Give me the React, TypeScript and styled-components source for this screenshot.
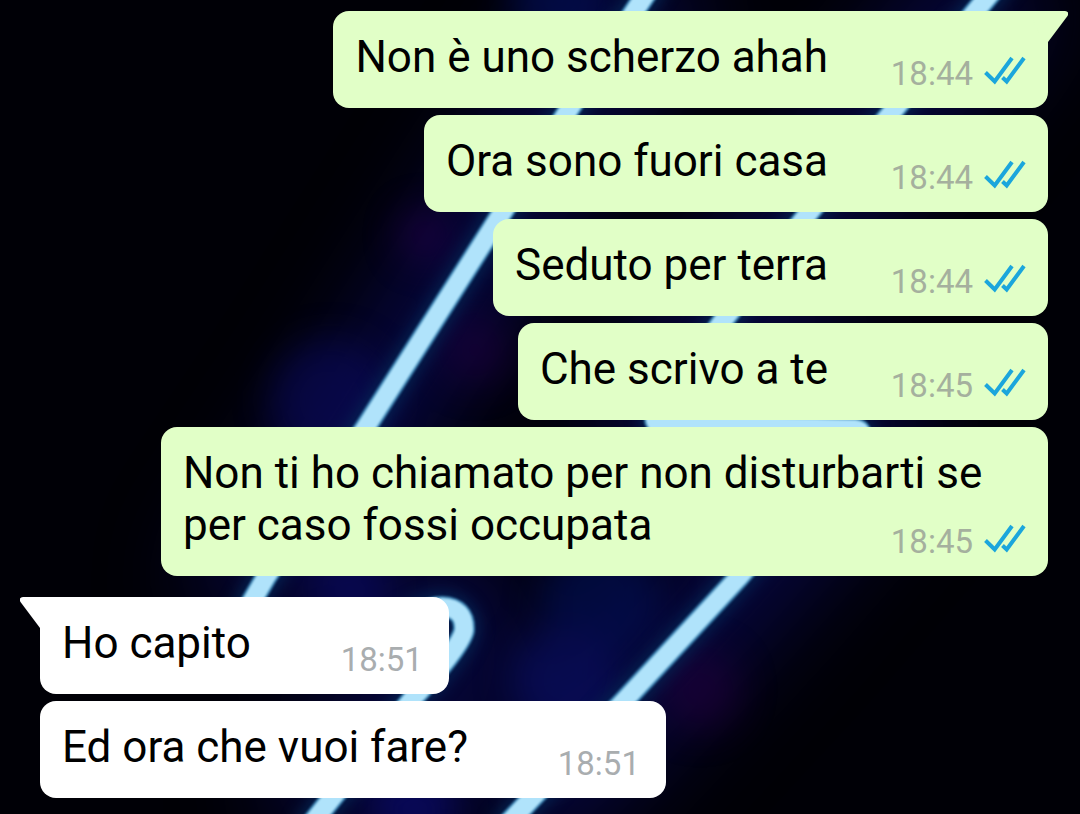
import React from "react";
import styled, { createGlobalStyle } from "styled-components";

const GlobalStyle = createGlobalStyle`
  * { box-sizing: border-box; }
  body {
    margin: 0;
    background: #00000a;
    font-family: Roboto, "Liberation Sans", sans-serif;
  }
`;

const Screen = styled.main`
  position: relative;
  isolation: isolate;
  min-height: 100vh;
  overflow: hidden;
  padding: 11px 32px 16px 40px;
`;

const Wallpaper = styled.svg`
  position: absolute;
  inset: 0;
  z-index: -1;
  width: 100%;
  height: 100%;
`;

const Conversation = styled.div`
  display: flex;
  flex-direction: column;
  gap: 21px;
`;

const MessageGroup = styled.ul<{ $sent: boolean }>`
  display: flex;
  flex-direction: column;
  align-items: ${(p) => (p.$sent ? "flex-end" : "flex-start")};
  gap: 7px;
  margin: 0;
  padding: 0;
  list-style: none;
`;

const Bubble = styled.li<{ $sent: boolean }>`
  position: relative;
  display: grid;
  max-width: 88%;
  padding: 20px 22px 15px;
  border-radius: 16px;
  background: ${(p) => (p.$sent ? "#e1ffc7" : "#ffffff")};
  color: #000000;
`;

const MessageText = styled.p`
  grid-area: 1 / 1;
  margin: 0;
  padding-bottom: 10px;
  font-size: 44px;
  line-height: 52px;
`;

/* Keeps the end of the last line clear of the time stamp. */
const StampRoom = styled.span<{ $sent: boolean }>`
  display: inline-block;
  width: ${(p) => (p.$sent ? 198 : 176)}px;
`;

const Stamp = styled.div<{ $sent: boolean }>`
  grid-area: 1 / 1;
  place-self: end;
  display: flex;
  align-items: center;
  gap: 11px;
  margin-right: ${(p) => (p.$sent ? 0 : 4)}px;
  color: ${(p) => (p.$sent ? "#a5b09e" : "#a9adaf")};
  font-size: 33px;
  line-height: 38px;
`;

const TickIcon = styled.svg`
  display: block;
  width: 42px;
  height: 30px;
  margin-bottom: 7px;
`;

const TailShape = styled.svg<{ $sent: boolean }>`
  position: absolute;
  top: 0;
  ${(p) => (p.$sent ? "right: -20px;" : "left: -20px; transform: scaleX(-1);")}
  width: 40px;
  height: 32px;
`;

function Ticks() {
  return (
    <TickIcon viewBox="0 0 42 30" role="img" aria-label="Letto" fill="none" stroke="#1ba6dc" strokeWidth="4">
      <path d="M1.5 16.5 L10.7 25.5 L28 2" />
      <path d="M18.5 21.5 L22.7 25.5 L40 2" />
    </TickIcon>
  );
}

function Tail({ sent }: { sent: boolean }) {
  return (
    <TailShape $sent={sent} viewBox="0 0 40 32" aria-hidden="true">
      <path d="M0 0 H37 Q42 1 39.5 5 L20 31 H16 Z" fill={sent ? "#e1ffc7" : "#ffffff"} />
    </TailShape>
  );
}

const neonStrokes = [
  "M662 -30 L642 0 L568 111 L502 213 L366 427 L266 577 L240 622",
  "M1010 -30 L985 0 L893 111 L807 215 L722 322 L656 414 Q652 425 663 424 L855 429 Q866 430 854 445 L738 578 L625 700 L532 798 L500 832",
  "M380 640 Q418 607 442 607 Q465 608 464 630 Q462 645 414 697 L332 798 L305 832",
];

const glows = [
  { cx: 425, cy: 235, r: 26, fill: "#22004a" },
  { cx: 330, cy: 400, r: 60, fill: "#0a0a58" },
  { cx: 475, cy: 350, r: 34, fill: "#1c003c" },
  { cx: 600, cy: 600, r: 60, fill: "#02105a" },
  { cx: 565, cy: 680, r: 55, fill: "#0a1068" },
  { cx: 700, cy: 690, r: 40, fill: "#20003a" },
  { cx: 350, cy: 590, r: 40, fill: "#0a0a64" },
  { cx: 415, cy: 810, r: 45, fill: "#0c0c78" },
  { cx: 560, cy: 0, r: 50, fill: "#02105a" },
];

function NeonBackground() {
  return (
    <Wallpaper viewBox="0 0 1080 814" preserveAspectRatio="xMidYMid slice" aria-hidden="true">
      <defs>
        <filter id="haze" filterUnits="userSpaceOnUse" x="-200" y="-200" width="1480" height="1214" colorInterpolationFilters="sRGB">
          <feGaussianBlur stdDeviation="45" />
        </filter>
        <filter id="spot" filterUnits="userSpaceOnUse" x="-200" y="-200" width="1480" height="1214" colorInterpolationFilters="sRGB">
          <feGaussianBlur stdDeviation="18" />
        </filter>
        <filter id="halo" filterUnits="userSpaceOnUse" x="-200" y="-200" width="1480" height="1214" colorInterpolationFilters="sRGB">
          <feGaussianBlur stdDeviation="8" />
        </filter>
        <filter id="edge" filterUnits="userSpaceOnUse" x="-200" y="-200" width="1480" height="1214" colorInterpolationFilters="sRGB">
          <feGaussianBlur stdDeviation="1.3" />
        </filter>
      </defs>
      <rect width="1080" height="814" fill="#000006" />
      <g fill="none" strokeLinejoin="round">
        <g stroke="#06063c" strokeWidth="130" filter="url(#haze)">
          {neonStrokes.map((d) => <path key={d} d={d} />)}
        </g>
        <g opacity="0.6" filter="url(#spot)">
          {glows.map((glow) => <circle key={`${glow.cx}-${glow.cy}`} {...glow} />)}
        </g>
        <g stroke="#042a58" strokeWidth="30" opacity="0.8" filter="url(#halo)">
          {neonStrokes.map((d) => <path key={d} d={d} />)}
        </g>
        <g filter="url(#edge)">
          <g stroke="#3f86b4" strokeWidth="22">
            {neonStrokes.map((d) => <path key={d} d={d} />)}
          </g>
          <g stroke="#b0e3fb" strokeWidth="18">
            {neonStrokes.map((d) => <path key={d} d={d} />)}
          </g>
        </g>
      </g>
    </Wallpaper>
  );
}

type Message = { text: string; time: string };

const groups: { sent: boolean; messages: Message[] }[] = [
  {
    sent: true,
    messages: [
      { text: "Non è uno scherzo ahah", time: "18:44" },
      { text: "Ora sono fuori casa", time: "18:44" },
      { text: "Seduto per terra", time: "18:44" },
      { text: "Che scrivo a te", time: "18:45" },
      { text: "Non ti ho chiamato per non disturbarti se per caso fossi occupata", time: "18:45" },
    ],
  },
  {
    sent: false,
    messages: [
      { text: "Ho capito", time: "18:51" },
      { text: "Ed ora che vuoi fare?", time: "18:51" },
    ],
  },
];

export default function App() {
  return (
    <>
      <GlobalStyle />
      <Screen lang="it">
        <NeonBackground />
        <Conversation>
          {groups.map(({ sent, messages }) => (
            <MessageGroup key={String(sent)} $sent={sent}>
              {messages.map((message, index) => (
                <Bubble key={message.text} $sent={sent}>
                  {index === 0 && <Tail sent={sent} />}
                  <MessageText>
                    {message.text}
                    <StampRoom $sent={sent} />
                  </MessageText>
                  <Stamp $sent={sent}>
                    <time>{message.time}</time>
                    {sent && <Ticks />}
                  </Stamp>
                </Bubble>
              ))}
            </MessageGroup>
          ))}
        </Conversation>
      </Screen>
    </>
  );
}
